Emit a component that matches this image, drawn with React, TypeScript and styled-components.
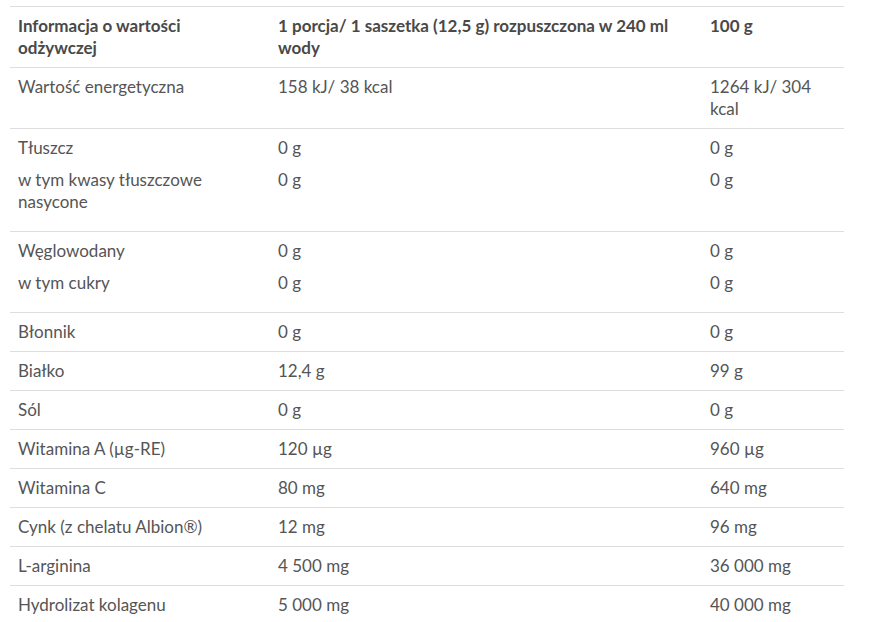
import styled, { createGlobalStyle } from 'styled-components';

const GlobalStyle = createGlobalStyle`
  body {
    margin: 0;
    background: #ffffff;
    font-family: Lato, "Open Sans", sans-serif;
  }
`;

const Page = styled.div`
  padding: 6px 0 0 10px;
`;

const Table = styled.div`
  width: 834px;
  display: flex;
  flex-direction: column;
  font-size: 17px;
  line-height: 22px;
  color: #555555;
`;

const Group = styled.div<{ $loose?: boolean; $head?: boolean }>`
  display: flex;
  flex-direction: column;
  gap: 10px;
  border-top: 1px solid #dedede;
  padding: 8px 0 ${(p) => (p.$loose ? 18 : 8)}px;
  font-weight: ${(p) => (p.$head ? 700 : 400)};
  color: ${(p) => (p.$head ? '#494949' : '#555555')};
`;

const SubRow = styled.div`
  display: grid;
  grid-template-columns: 260px 432px 142px;
`;

const Cell = styled.div<{ $right: number }>`
  padding: 0 ${(p) => p.$right}px 0 8px;
`;

type Line = [string, string, string];

const groups: { lines: Line[]; head?: boolean; loose?: boolean }[] = [
  {
    head: true,
    lines: [['Informacja o wartości odżywczej', '1 porcja/ 1 saszetka (12,5 g) rozpuszczona w 240 ml wody', '100 g']],
  },
  { lines: [['Wartość energetyczna', '158 kJ/ 38 kcal', '1264 kJ/ 304 kcal']] },
  {
    loose: true,
    lines: [
      ['Tłuszcz', '0 g', '0 g'],
      ['w tym kwasy tłuszczowe nasycone', '0 g', '0 g'],
    ],
  },
  {
    loose: true,
    lines: [
      ['Węglowodany', '0 g', '0 g'],
      ['w tym cukry', '0 g', '0 g'],
    ],
  },
  { lines: [['Błonnik', '0 g', '0 g']] },
  { lines: [['Białko', '12,4 g', '99 g']] },
  { lines: [['Sól', '0 g', '0 g']] },
  { lines: [['Witamina A (µg-RE)', '120 µg', '960 µg']] },
  { lines: [['Witamina C', '80 mg', '640 mg']] },
  { lines: [['Cynk (z chelatu Albion®)', '12 mg', '96 mg']] },
  { lines: [['L-arginina', '4 500 mg', '36 000 mg']] },
  { lines: [['Hydrolizat kolagenu', '5 000 mg', '40 000 mg']] },
];

// padding-right per column, so the wraps fall where they do in the label
const rightPad = [22, 20, 20];

export default function App() {
  return (
    <>
      <GlobalStyle />
      <Page>
        <Table>
          {groups.map((g, i) => (
            <Group key={i} $head={g.head} $loose={g.loose}>
              {g.lines.map((line, j) => (
                <SubRow key={j}>
                  {line.map((text, k) => (
                    <Cell key={k} $right={rightPad[k]}>
                      {text}
                    </Cell>
                  ))}
                </SubRow>
              ))}
            </Group>
          ))}
        </Table>
      </Page>
    </>
  );
}
